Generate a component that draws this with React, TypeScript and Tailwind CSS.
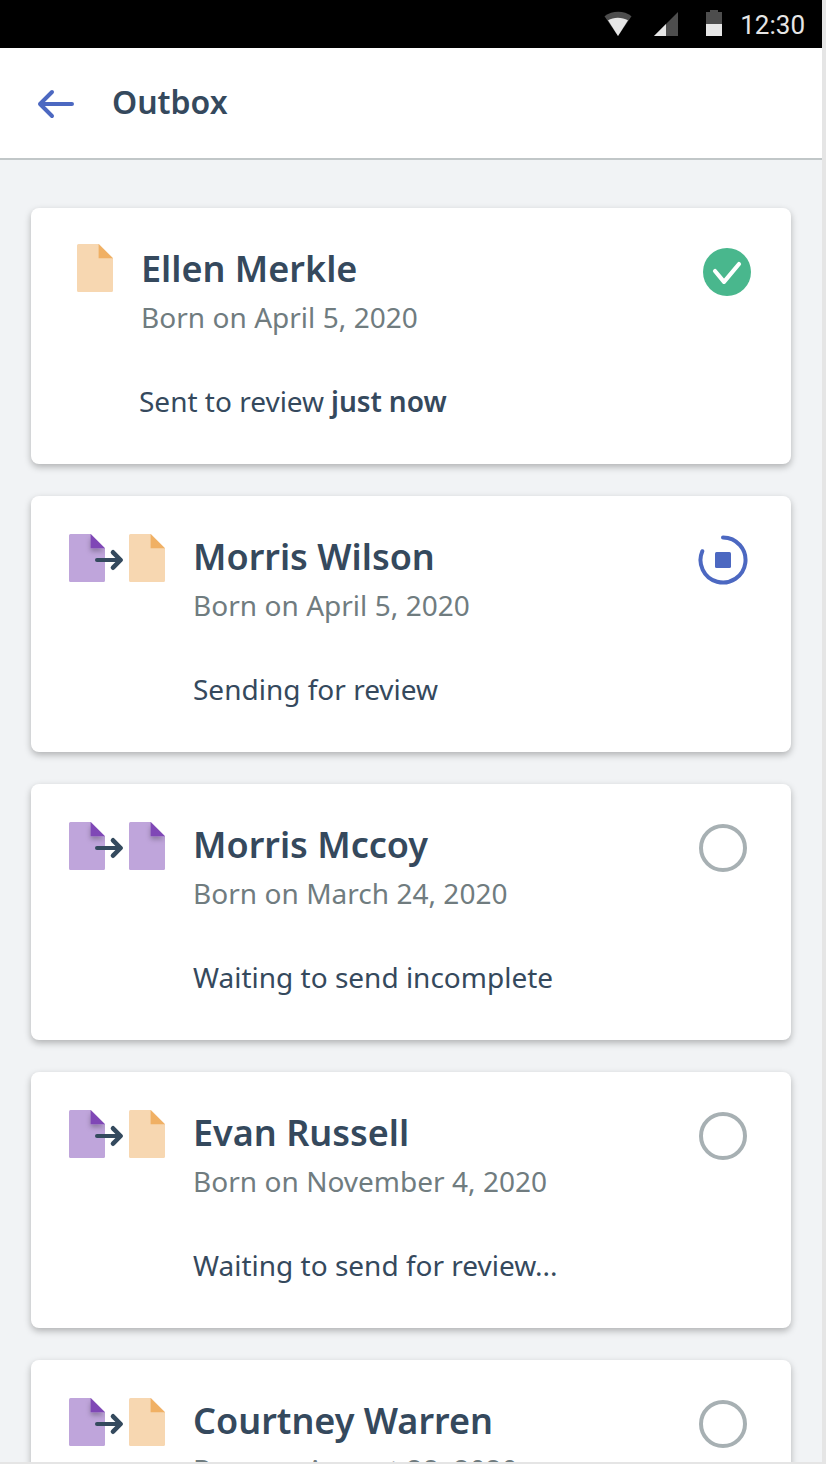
import React from "react";

type Kind = "complete" | "incomplete";
type State = "done" | "sending" | "waiting";

interface Item {
  name: string;
  born: string;
  from?: Kind;
  to: Kind;
  state: State;
  message: string;
  when?: string;
}

const items: Item[] = [
  { name: "Ellen Merkle", born: "April 5, 2020", to: "complete", state: "done", message: "Sent to review", when: "just now" },
  { name: "Morris Wilson", born: "April 5, 2020", from: "incomplete", to: "complete", state: "sending", message: "Sending for review" },
  { name: "Morris Mccoy", born: "March 24, 2020", from: "incomplete", to: "incomplete", state: "waiting", message: "Waiting to send incomplete" },
  { name: "Evan Russell", born: "November 4, 2020", from: "incomplete", to: "complete", state: "waiting", message: "Waiting to send for review..." },
  { name: "Courtney Warren", born: "August 28, 2020", from: "incomplete", to: "complete", state: "waiting", message: "Waiting to send for review..." },
];

function DocIcon({ kind }: { kind: Kind }) {
  const purple = kind === "incomplete";
  return (
    <svg width="36" height="48" viewBox="0 0 36 48" className="shrink-0">
      <defs>
        <filter id="fold-shadow" x="-60%" y="-60%" width="220%" height="220%">
          <feDropShadow dx="0" dy="3" stdDeviation="2.5" floodColor="#000" floodOpacity="0.28" />
        </filter>
        <clipPath id="doc-shape">
          <path d="M1.5 0H22L36 14V46.500a1.500 1.500 0 0 1-1.500 1.500H1.500A1.500 1.500 0 0 1 0 46.500V1.500A1.500 1.500 0 0 1 1.500 0Z" />
        </clipPath>
      </defs>
      <g clipPath="url(#doc-shape)">
        <path d="M0 0H36V48H0Z" fill={purple ? "#bfa5db" : "#f7d7b1"} />
        <path d="M21.600 0L36 14.200H21.600Z" fill={purple ? "#7f47b6" : "#f0b064"} filter={purple ? "url(#fold-shadow)" : undefined} />
      </g>
    </svg>
  );
}

function Transition({ from, to }: { from?: Kind; to: Kind }) {
  if (!from) {
    return (
      <div className="ml-[46px] mt-9 w-16 shrink-0">
        <DocIcon kind={to} />
      </div>
    );
  }
  return (
    <div className="relative ml-[38px] mt-[38px] flex h-12 w-[124px] shrink-0 gap-6">
      <DocIcon kind={from} />
      <DocIcon kind={to} />
      <svg width="30" height="22" viewBox="0 0 30 22" className="absolute left-[25px] top-[15px]" fill="none" stroke="#344a5e" strokeWidth="4" strokeLinecap="round" strokeLinejoin="round">
        <path d="M3 11H26.500" />
        <path d="M19 3.300L26.600 11L19 18.700" strokeWidth="4.600" />
      </svg>
    </div>
  );
}

function StateIcon({ state }: { state: State }) {
  if (state === "done") {
    return (
      <svg width="48" height="48" viewBox="0 0 48 48" className="mr-10 mt-10 shrink-0">
        <circle cx="24" cy="24" r="24" fill="#49b78d" />
        <path d="M12 23L21 33.800L36 16" fill="none" stroke="#fff" strokeWidth="4.200" strokeLinecap="round" strokeLinejoin="round" />
      </svg>
    );
  }
  if (state === "sending") {
    return (
      <svg width="50" height="50" viewBox="0 0 50 50" className="mr-[43px] mt-[39px] shrink-0">
        <path d="M25 2.500A22.500 22.500 0 1 1 4.300 16.200" fill="none" stroke="#4c68c1" strokeWidth="4" strokeLinecap="round" />
        <rect x="17" y="17" width="16" height="16" rx="1.500" fill="#4c68c1" />
      </svg>
    );
  }
  return (
    <svg width="48" height="48" viewBox="0 0 48 48" className="mr-11 mt-10 shrink-0">
      <circle cx="24" cy="24" r="22" fill="none" stroke="#a7b0b3" strokeWidth="4" />
    </svg>
  );
}

function Card({ item }: { item: Item }) {
  return (
    <article className="flex h-64 w-[760px] shrink-0 items-start rounded-lg bg-white shadow-[0_3px_7px_rgba(0,0,0,0.27)]">
      <Transition from={item.from} to={item.to} />
      <div className="flex-1 whitespace-nowrap pt-[37px]">
        <h2 className="text-4xl/[48px] font-semibold text-[#35495d]">{item.name}</h2>
        <p className="mt-1 text-[28px]/[40px] text-[#707c7f] [word-spacing:0.15px]">Born on {item.born}</p>
        <p className={`mt-11 text-[28px]/[40px] text-[#35495d] ${item.from ? "" : "-ml-0.5"}`}>
          {item.message}
          {item.when && <span className="font-semibold [word-spacing:-0.4px]"> {item.when}</span>}
        </p>
      </div>
      <StateIcon state={item.state} />
    </article>
  );
}

function StatusBar() {
  return (
    <div className="flex h-12 shrink-0 items-start justify-end bg-black">
      <svg width="74" height="48" viewBox="0 0 74 48" className="mr-7 shrink-0">
        <path d="M0.500 16.200C8.500 10.400 20 10.400 27.500 16.200L14 36Z" fill="#4d4d4d" />
        <path d="M4 20.300C9.500 16.900 18 16.900 24 20.300L14 36Z" fill="#e6e6e6" />
        <path d="M74 12V36H50Z" fill="#4d4d4d" />
        <path d="M62 24V36H50Z" fill="#e6e6e6" />
      </svg>
      <svg width="16" height="26" viewBox="0 0 16 26" className="mr-[18px] mt-2.5 shrink-0">
        <path d="M0 2H4V0H12V2H16V14H0Z" fill="#4d4d4d" />
        <path d="M0 14H16V26H0Z" fill="#e6e6e6" />
      </svg>
      <span className="mr-[17px] mt-px font-['Roboto',sans-serif] text-[26px]/[48px] text-[#e6e6e6]">12:30</span>
    </div>
  );
}

export default function App() {
  return (
    <div className="h-[1464px] w-[826px] overflow-hidden border-b-2 border-r-4 border-[#e5e5e5] bg-[#f1f3f5] font-['Noto_Sans',sans-serif]">
      <div className="flex h-full flex-col overflow-hidden">
        <StatusBar />
        <header className="flex h-28 shrink-0 items-center border-b-2 border-[#c1c7c8] bg-white pl-9">
          <svg width="40" height="32" viewBox="0 0 40 32" fill="none" stroke="#4c68c1" strokeWidth="4" strokeLinecap="round" strokeLinejoin="round" className="mt-0.5">
            <path d="M36 16H4M16 4L4 16L16 28" />
          </svg>
          <h1 className="ml-9 mb-0.5 text-[32px]/[44px] font-semibold text-[#35495d]">Outbox</h1>
        </header>
        <main className="flex flex-col gap-8 pl-[31px] pt-12">
          {items.map((item) => (
            <Card key={item.name} item={item} />
          ))}
        </main>
      </div>
    </div>
  );
}
